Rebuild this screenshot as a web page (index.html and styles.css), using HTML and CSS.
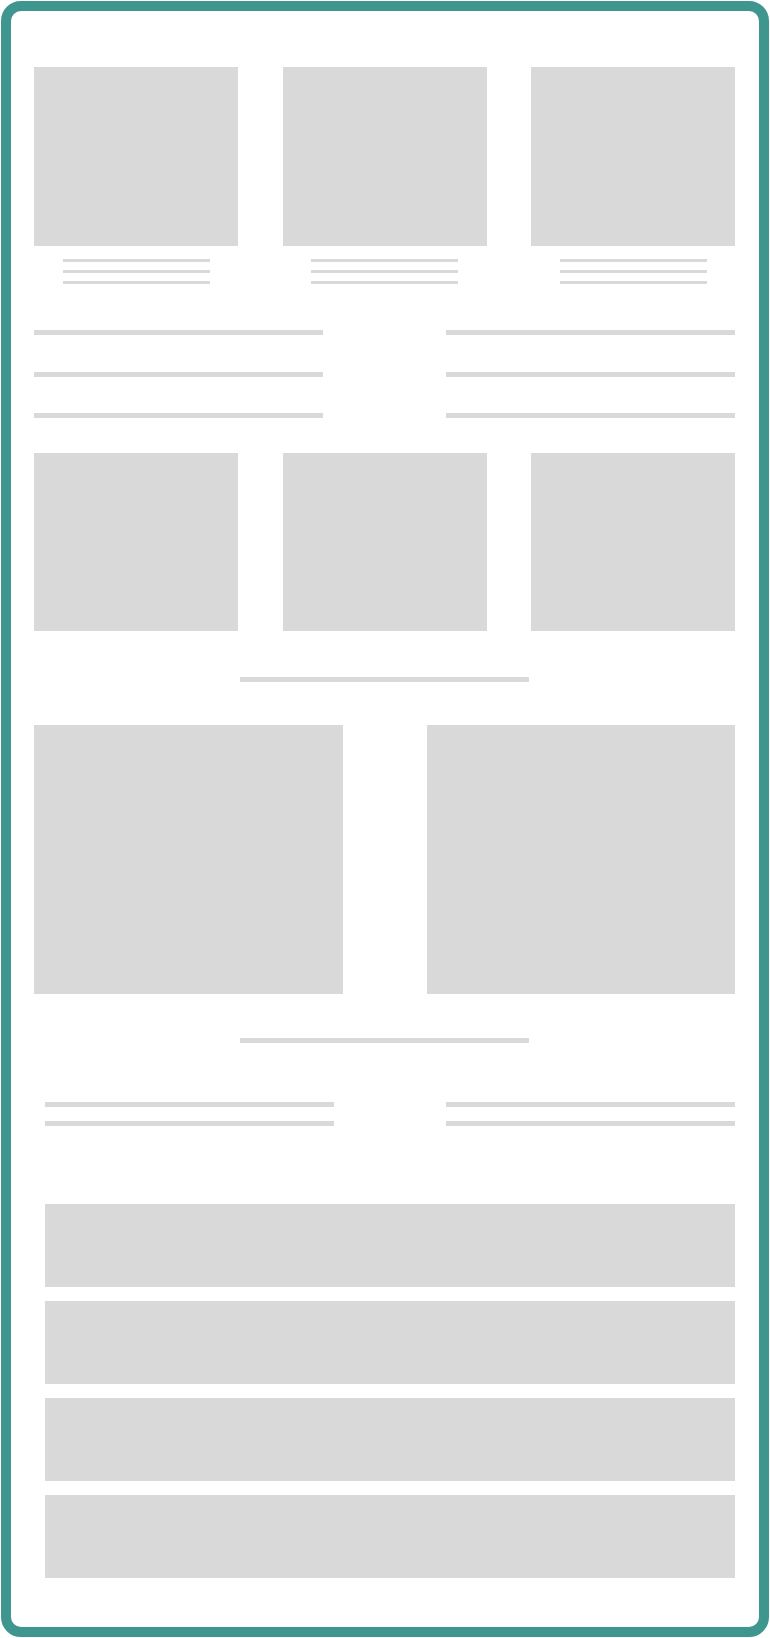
FILE: index.html
```html
<!DOCTYPE html>
<html lang="en">
<head>
<meta charset="UTF-8">
<title>Wireframe</title>
<link rel="stylesheet" href="styles.css">
</head>
<body>

<div class="frame">

  <div class="tiles">
    <div class="tile">
      <div class="block"></div>
      <div class="caption"><span></span><span></span><span></span></div>
    </div>
    <div class="tile">
      <div class="block"></div>
      <div class="caption"><span></span><span></span><span></span></div>
    </div>
    <div class="tile">
      <div class="block"></div>
      <div class="caption"><span></span><span></span><span></span></div>
    </div>
  </div>

  <div class="pair-lines">
    <div class="stack"><span></span><span></span><span></span></div>
    <div class="stack"><span></span><span></span><span></span></div>
  </div>

  <div class="tiles second">
    <div class="block"></div>
    <div class="block"></div>
    <div class="block"></div>
  </div>

  <div class="center-line"></div>

  <div class="big-pair">
    <div class="block"></div>
    <div class="block"></div>
  </div>

  <div class="center-line after-big"></div>

  <div class="pair-lines short">
    <div class="stack"><span></span><span></span></div>
    <div class="stack"><span></span><span></span></div>
  </div>

  <div class="bars">
    <div class="bar"></div>
    <div class="bar"></div>
    <div class="bar"></div>
    <div class="bar"></div>
  </div>

</div>

</body>
</html>
```

FILE: styles.css
```css
:root {
  --teal: #3e968f;
  --grey: #d9d9d9;
}
body {
  margin: 0;
  background: #ffffff;
  font-family: "Liberation Sans", Arial, sans-serif;
}
.frame {
  box-sizing: border-box;
  margin: 1px;
  width: 768px;
  height: 1636px;
  border: 10px solid var(--teal);
  border-radius: 20px;
  padding: 56px 24px 0 23px;
}
.block {
  background: var(--grey);
}

/* three image tiles */
.tiles {
  display: grid;
  grid-template-columns: repeat(3, 1fr);
  column-gap: 44.5px;
}
.tiles .block {
  height: 179px;
}
.tile {
  display: flex;
  flex-direction: column;
  align-items: center;
}
.tile .block {
  align-self: stretch;
}
.caption {
  display: flex;
  flex-direction: column;
  gap: 8px;
  margin-top: 13px;
}
.caption span {
  display: block;
  width: 147px;
  height: 3px;
  background: var(--grey);
}
.tiles.second {
  margin-top: 35px;
}
.tiles.second .block {
  height: 178px;
}

/* two columns of lines */
.pair-lines {
  display: flex;
  justify-content: space-between;
  margin-top: 46px;
}
.stack {
  display: flex;
  flex-direction: column;
  gap: 36.5px;
}
.stack span {
  display: block;
  width: 289px;
  height: 5px;
  background: var(--grey);
}
.pair-lines.short {
  margin-top: 59px;
  padding-left: 11px;
}
.pair-lines.short .stack {
  gap: 14px;
}

.center-line {
  width: 289px;
  height: 5px;
  margin: 46px auto 0;
  background: var(--grey);
}
.center-line.after-big {
  margin-top: 44px;
}

.big-pair {
  display: grid;
  grid-template-columns: 1fr 1fr;
  column-gap: 84px;
  margin-top: 43px;
}
.big-pair .block {
  height: 269px;
}

.bars {
  display: flex;
  flex-direction: column;
  gap: 14px;
  margin: 78px 0 0 11px;
}
.bar {
  height: 83px;
  background: var(--grey);
}
```
